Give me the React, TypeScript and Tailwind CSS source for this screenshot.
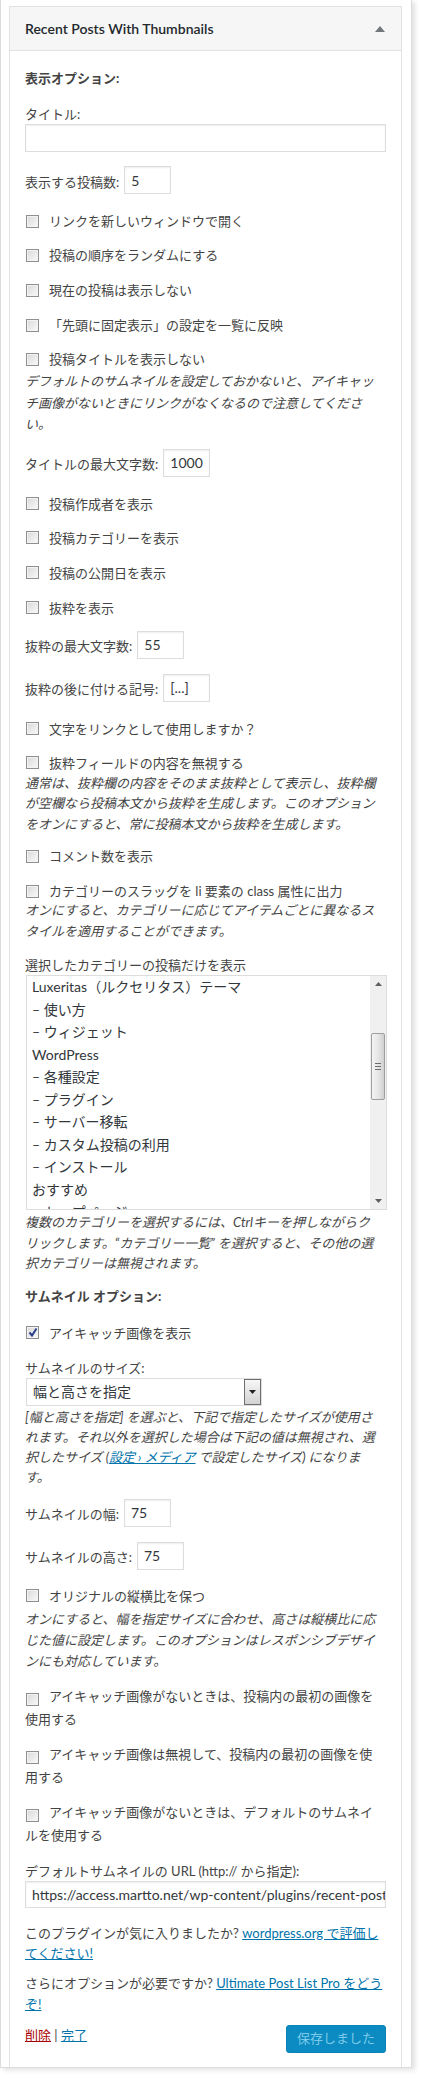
import React from 'react';

const FONT = "font-['Lato','Noto_Sans_CJK_JP',sans-serif]";

const Box = ({ checked = false }: { checked?: boolean }) => (
  <span className="relative inline-block h-[13px] w-[13px] shrink-0 border border-[#8f8f8f] bg-linear-to-br from-[#d9d9d9] to-[#fafafa] align-middle shadow-[inset_0_0_0_1px_#f3f3f3]">
    {checked && (
      <svg className="absolute left-[1px] top-[0px]" width="10" height="11" viewBox="0 0 10 11">
        <path d="M1.5 5.5 L4 8.5 L8.5 1.5" fill="none" stroke="#2a3f8c" strokeWidth="2" />
      </svg>
    )}
  </span>
);

const Check = ({ label, mt, checked }: { label: string; mt: string; checked?: boolean }) => (
  <div className={`flex h-[20px] items-center ${mt}`}>
    <span className="ml-[1px] flex">
      <Box checked={checked} />
    </span>
    <span className="ml-[10px] leading-[20px]">{label}</span>
  </div>
);

const WrapCheck = ({ lines, mt }: { lines: string[]; mt: string }) => (
  <div className={`whitespace-nowrap leading-[21px] ${mt}`}>
    <span className="ml-[1px] mr-[10px] inline-block align-[-2px]">
      <Box />
    </span>
    {lines[0]}
    <br />
    {lines[1]}
  </div>
);

const Note = ({ lines, mt, lh }: { lines: React.ReactNode[]; mt: string; lh: string }) => (
  <div className={`whitespace-nowrap italic ${lh} ${mt}`}>
    {lines.map((l, i) => (
      <div key={i}>{l}</div>
    ))}
  </div>
);

const NumRow = ({ label, value, w, mt }: { label: string; value: string; w: string; mt: string }) => (
  <div className={`flex h-[28px] items-center gap-[5px] ${mt}`}>
    <span className="mt-[5px] whitespace-nowrap">{label}</span>
    <input
      readOnly
      value={value}
      className={`h-[28px] ${w} border border-[#ddd] bg-white pl-[6px] text-[14px] text-[#32373c] shadow-[inset_0_1px_2px_rgba(0,0,0,0.07)] outline-none ${FONT}`}
    />
  </div>
);

const cats = [
  'Luxeritas（ルクセリタス）テーマ',
  '– 使い方',
  '– ウィジェット',
  'WordPress',
  '– 各種設定',
  '– プラグイン',
  '– サーバー移転',
  '– カスタム投稿の利用',
  '– インストール',
  'おすすめ',
  '– トップページ',
];

export default function App() {
  return (
    <div className={`min-h-[2079px] w-[428px] bg-white text-[13px] text-[#444] ${FONT}`}>
      <div className="w-[412px] border border-t-0 border-[#dcdcdc] pl-[8px] pr-[9px] pt-[6px] shadow-[3px_2px_5px_rgba(0,0,0,0.12)]">
        <div className="border border-b-0 border-[#e2e2e2]">
          <div className="flex h-[44px] items-center justify-between border-b border-[#e2e2e2] bg-[#f6f6f6] pl-[15px] pr-[16px]">
            <span className="font-['Lato',sans-serif] text-[14px] font-semibold text-[#23282d]">
              Recent Posts With Thumbnails
            </span>
            <svg width="10" height="6" viewBox="0 0 10 6">
              <polygon points="0,6 5,0 10,6" fill="#72777c" />
            </svg>
          </div>

          <div className="px-[15px] pb-[14px]">
            <div className="mt-[17px] h-[20px] font-bold leading-[20px]">表示オプション:</div>
            <div className="mt-[17px] h-[19px] leading-[19px]">タイトル:</div>
            <input
              readOnly
              value=""
              className={`block h-[28px] w-full border border-[#ddd] bg-white shadow-[inset_0_1px_2px_rgba(0,0,0,0.07)] outline-none ${FONT}`}
            />
            <NumRow label="表示する投稿数:" value="5" w="w-[47px]" mt="mt-[14px]" />
            <Check label="リンクを新しいウィンドウで開く" mt="mt-[17px]" />
            <Check label="投稿の順序をランダムにする" mt="mt-[14px]" />
            <Check label="現在の投稿は表示しない" mt="mt-[15px]" />
            <Check label="「先頭に固定表示」の設定を一覧に反映" mt="mt-[15px]" />
            <Check label="投稿タイトルを表示しない" mt="mt-[14px]" />
            <Note
              mt="mt-[2px]"
              lh="leading-[21.5px]"
              lines={[
                'デフォルトのサムネイルを設定しておかないと、アイキャッ',
                'チ画像がないときにリンクがなくなるので注意してくださ',
                'い。',
              ]}
            />
            <NumRow label="タイトルの最大文字数:" value="1000" w="w-[47px]" mt="mt-[13px]" />
            <Check label="投稿作成者を表示" mt="mt-[17px]" />
            <Check label="投稿カテゴリーを表示" mt="mt-[14px]" />
            <Check label="投稿の公開日を表示" mt="mt-[15px]" />
            <Check label="抜粋を表示" mt="mt-[15px]" />
            <NumRow label="抜粋の最大文字数:" value="55" w="w-[47px]" mt="mt-[13px]" />
            <NumRow label="抜粋の後に付ける記号:" value="[...]" w="w-[47px]" mt="mt-[15px]" />
            <Check label="文字をリンクとして使用しますか？" mt="mt-[17px]" />
            <Check label="抜粋フィールドの内容を無視する" mt="mt-[14px]" />
            <Note
              mt="mt-0"
              lh="leading-[20.5px]"
              lines={[
                '通常は、抜粋欄の内容をそのまま抜粋として表示し、抜粋欄',
                'が空欄なら投稿本文から抜粋を生成します。このオプション',
                'をオンにすると、常に投稿本文から抜粋を生成します。',
              ]}
            />
            <Check label="コメント数を表示" mt="mt-[12px]" />
            <Check label="カテゴリーのスラッグを li 要素の class 属性に出力" mt="mt-[15px]" />
            <Note
              mt="-mt-[1px]"
              lh="leading-[21px]"
              lines={[
                'オンにすると、カテゴリーに応じてアイテムごとに異なるス',
                'タイルを適用することができます。',
              ]}
            />
            <div className="mt-[14px] h-[19px] leading-[19px]">選択したカテゴリーの投稿だけを表示</div>
            <div className="ml-[1px] flex h-[235px] w-[361px] overflow-hidden border border-[#ddd] bg-white">
              <div className="flex-1 overflow-hidden pl-[5px] text-[14px] leading-[22.5px] text-[#32373c]">
                {cats.map((c) => (
                  <div key={c} className="whitespace-nowrap">
                    {c}
                  </div>
                ))}
              </div>
              <div className="flex w-[16px] flex-col items-center bg-[#f0f0f0]">
                <div className="flex h-[16px] w-full items-center justify-center">
                  <svg width="7" height="4" viewBox="0 0 7 4">
                    <polygon points="0,4 3.5,0 7,4" fill="#606060" />
                  </svg>
                </div>
                <div className="mt-[41px] flex h-[67px] w-[14px] flex-col items-center justify-center gap-[2px] rounded-[2px] border border-[#9e9e9e] bg-linear-to-r from-[#f4f4f4] via-[#e6e6e6] to-[#d0d0d0]">
                  <span className="h-px w-[6px] bg-[#6d6d6d]" />
                  <span className="h-px w-[6px] bg-[#6d6d6d]" />
                  <span className="h-px w-[6px] bg-[#6d6d6d]" />
                </div>
                <div className="flex-1" />
                <div className="flex h-[16px] w-full items-center justify-center">
                  <svg width="7" height="4" viewBox="0 0 7 4">
                    <polygon points="0,0 3.5,4 7,0" fill="#606060" />
                  </svg>
                </div>
              </div>
            </div>
            <Note
              mt="mt-[2px]"
              lh="leading-[20.5px]"
              lines={[
                '複数のカテゴリーを選択するには、Ctrlキーを押しながらク',
                'リックします。“カテゴリー一覧” を選択すると、その他の選',
                '択カテゴリーは無視されます。',
              ]}
            />
            <div className="mt-[12px] h-[20px] font-bold leading-[20px]">サムネイル オプション:</div>
            <Check label="アイキャッチ画像を表示" mt="mt-[17px]" checked />
            <div className="mt-[15px] h-[20px] leading-[20px]">サムネイルのサイズ:</div>
            <div className="ml-[1px] flex h-[28px] w-[236px] border border-[#ddd] bg-white">
              <span className="flex-1 pl-[6px] text-[14px] leading-[26px] text-[#32373c]">幅と高さを指定</span>
              <span className="flex w-[17px] items-center justify-center border border-[#6f6f6f] bg-linear-to-b from-[#f7f7f7] to-[#d2d2d2]">
                <svg width="7" height="4" viewBox="0 0 7 4">
                  <polygon points="0,0 3.5,4 7,0" fill="#222" />
                </svg>
              </span>
            </div>
            <Note
              mt="mt-[1px]"
              lh="leading-[20px]"
              lines={[
                '[幅と高さを指定] を選ぶと、下記で指定したサイズが使用さ',
                'れます。それ以外を選択した場合は下記の値は無視され、選',
                <>
                  択したサイズ (<span className="text-[#0073aa] underline">設定 › メディア</span> で設定したサイズ) になりま
                </>,
                'す。',
              ]}
            />
            <NumRow label="サムネイルの幅:" value="75" w="w-[47px]" mt="mt-[12px]" />
            <NumRow label="サムネイルの高さ:" value="75" w="w-[47px]" mt="mt-[15px]" />
            <Check label="オリジナルの縦横比を保つ" mt="mt-[16px]" />
            <Note
              mt="mt-[3px]"
              lh="leading-[21px]"
              lines={[
                'オンにすると、幅を指定サイズに合わせ、高さは縦横比に応',
                'じた値に設定します。このオプションはレスポンシブデザイ',
                'ンにも対応しています。',
              ]}
            />
            <WrapCheck mt="mt-[14px]" lines={['アイキャッチ画像がないときは、投稿内の最初の画像を', '使用する']} />
            <WrapCheck mt="mt-[14px]" lines={['アイキャッチ画像は無視して、投稿内の最初の画像を使', '用する']} />
            <WrapCheck mt="mt-[14px]" lines={['アイキャッチ画像がないときは、デフォルトのサムネイ', 'ルを使用する']} />
            <div className="mt-[16px] h-[19px] leading-[19px]">デフォルトサムネイルの URL (http:// から指定):</div>
            <input
              readOnly
              value="https://access.martto.net/wp-content/plugins/recent-posts-widget-with-thumbnails/default_thumb.gif"
              className={`block h-[27px] w-full border border-[#ddd] bg-white pl-[6px] text-[14px] text-[#32373c] shadow-[inset_0_1px_2px_rgba(0,0,0,0.07)] outline-none ${FONT}`}
            />
            <div className="mt-[15px] whitespace-nowrap leading-[20px]">
              このプラグインが気に入りましたか? <span className="text-[#0073aa] underline">wordpress.org で評価し</span>
              <br />
              <span className="text-[#0073aa] underline">てください!</span>
            </div>
            <div className="mt-[10px] whitespace-nowrap leading-[21px]">
              さらにオプションが必要ですか? <span className="text-[#0073aa] underline">Ultimate Post List Pro をどう</span>
              <br />
              <span className="text-[#0073aa] underline">ぞ!</span>
            </div>
            <div className="mt-[10px] flex items-start justify-between">
              <div className="leading-[20px]">
                <span className="text-[#a00] underline">削除</span> | <span className="text-[#0073aa] underline">完了</span>
              </div>
              <button className="h-[28px] w-[100px] rounded-[3px] border border-[#0a84b6] bg-[#0b8bc1] text-[13px] text-[#7ccaea]">
                保存しました
              </button>
            </div>
          </div>
        </div>
      </div>
    </div>
  );
}
